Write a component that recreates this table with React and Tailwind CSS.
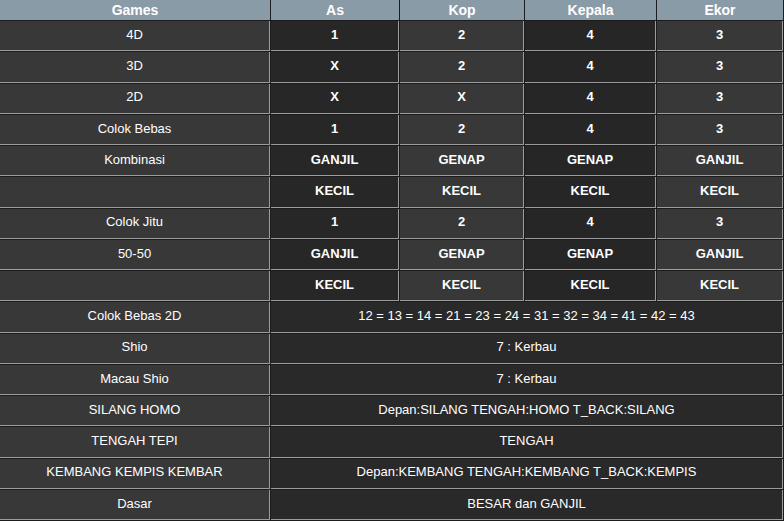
const COLS = ["As", "Kop", "Kepala", "Ekor"];

const ROWS = [
  { game: "4D", vals: ["1", "2", "4", "3"] },
  { game: "3D", vals: ["X", "2", "4", "3"] },
  { game: "2D", vals: ["X", "X", "4", "3"] },
  { game: "Colok Bebas", vals: ["1", "2", "4", "3"] },
  { game: "Kombinasi", vals: ["GANJIL", "GENAP", "GENAP", "GANJIL"] },
  { game: "", vals: ["KECIL", "KECIL", "KECIL", "KECIL"] },
  { game: "Colok Jitu", vals: ["1", "2", "4", "3"] },
  { game: "50-50", vals: ["GANJIL", "GENAP", "GENAP", "GANJIL"] },
  { game: "", vals: ["KECIL", "KECIL", "KECIL", "KECIL"] },
  { game: "Colok Bebas 2D", text: "12 = 13 = 14 = 21 = 23 = 24 = 31 = 32 = 34 = 41 = 42 = 43" },
  { game: "Shio", text: "7 : Kerbau" },
  { game: "Macau Shio", text: "7 : Kerbau" },
  { game: "SILANG HOMO", text: "Depan:SILANG TENGAH:HOMO T_BACK:SILANG" },
  { game: "TENGAH TEPI", text: "TENGAH" },
  { game: "KEMBANG KEMPIS KEMBAR", text: "Depan:KEMBANG TENGAH:KEMBANG T_BACK:KEMPIS" },
  { game: "Dasar", text: "BESAR dan GANJIL" },
];

// alternating column shades, as in the original table
const colBg = ["bg-[#272727]", "bg-[#383838]", "bg-[#262626]", "bg-[#383838]"];

const cell = "flex items-center justify-center pb-[2px] border-r border-b border-[#9c9c9c] text-[13px] text-white";

export default function App() {
  return (
    <div
      className="w-[784px] h-[521px] bg-[#1c1c1c] grid gap-px grid-cols-[270px_128px_124px_131px_126px] grid-rows-[20px_repeat(16,30.25px)] overflow-hidden"
      style={{ fontFamily: '"Liberation Sans", Arial, sans-serif' }}
    >
      <div className="flex items-center justify-center bg-[#8a9ba8] text-white font-bold text-[14px]">Games</div>
      {COLS.map(c => (
        <div key={c} className="flex items-center justify-center bg-[#8a9ba8] text-white font-bold text-[14px]">{c}</div>
      ))}

      {ROWS.map((r, i) => (
        <Row key={i} row={r} />
      ))}
    </div>
  );
}

function Row({ row }) {
  return (
    <>
      <div className={`${cell} bg-[#383838]`}>{row.game}</div>
      {row.vals ? (
        row.vals.map((v, j) => (
          <div key={j} className={`${cell} ${colBg[j]} font-bold`}>{v}</div>
        ))
      ) : (
        <div className={`${cell} col-span-4 bg-[#292929]`}>{row.text}</div>
      )}
    </>
  );
}
